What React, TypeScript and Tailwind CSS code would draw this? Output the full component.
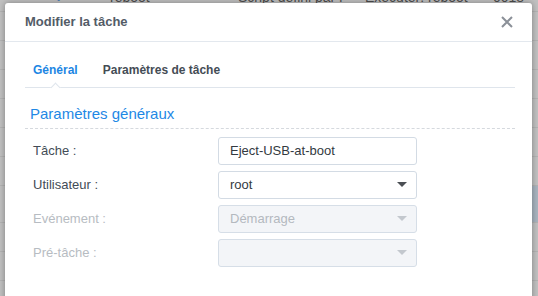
import React from "react";

const font = { fontFamily: '"Liberation Sans", Arial, sans-serif' };

function Caret({ disabled }: { disabled?: boolean }) {
  return (
    <svg width="10" height="6" viewBox="0 0 10 6" className="shrink-0">
      <path d="M0 0 L10 0 L5 5 Z" fill={disabled ? "#c3c8ce" : "#4b4f54"} />
    </svg>
  );
}

function Row({
  label,
  disabled,
  children,
}: {
  label: string;
  disabled?: boolean;
  children: React.ReactNode;
}) {
  return (
    <div className="flex items-center h-[28px]">
      <div
        className={`w-[193px] pl-[8px] text-[13px] ${
          disabled ? "text-[#b7bcc2]" : "text-[#434c56]"
        }`}
      >
        {label}
      </div>
      {children}
    </div>
  );
}

export default function App() {
  const bgRows = [
    { a: "reboot", b: "Script défini par l'", c: "Exécuter: reboot", d: "0018" },
    { a: "", b: "", c: "", d: "" },
    { a: "", b: "", c: "", d: "" },
    { a: "", b: "", c: "", d: "" },
    { a: "", b: "", c: "", d: "" },
    { a: "", b: "", c: "", d: "" },
    { a: "", b: "", c: "", d: "" },
    { a: "", b: "", c: "", d: "" },
    { a: "", b: "", c: "", d: "" },
    { a: "", b: "", c: "", d: "" },
    { a: "", b: "", c: "", d: "" },
  ];
  return (
    <div className="relative w-[538px] h-[296px] overflow-hidden bg-[#c1c1c1]" style={font}>
      {/* background table (dimmed) */}
      <div className="flex flex-col mt-[-17px]">
        {bgRows.map((r, i) => (
          <div
            key={i}
            className={`flex items-center border-b border-[#b3b3b3] text-[14px] text-[#4d4d4d] ${
              i === 7 ? "h-[37px] bg-[linear-gradient(to_right,#c1c1c1_0px,#c1c1c1_20px,#a9b4bf_20px)]" : "h-[29px]"
            }`}
          >
            <div className="w-[55px]" />
            <div className="w-[55px] text-[#2a6fb5]">{i === 0 ? "✔" : ""}</div>
            <div className="w-[128px]">{r.a}</div>
            <div className="w-[127px]">{r.b}</div>
            <div className="w-[128px]">{r.c}</div>
            <div className="w-[45px]">{r.d}</div>
          </div>
        ))}
      </div>

      {/* dialog */}
      <div className="absolute left-[5px] top-[3px] w-[527px] h-[310px] bg-white rounded-t-[3px] shadow-[0_0_6px_rgba(0,0,0,0.35)] flex flex-col">
        <div className="flex items-center justify-between h-[39px] pl-[20px] pr-[19px] border-b border-[#e3e8ee]">
          <div className="text-[13px] font-bold text-[#535c67]">Modifier la tâche</div>
          <svg width="12" height="12" viewBox="0 0 12 12">
            <path d="M1 1 L11 11 M11 1 L1 11" stroke="#8b9098" strokeWidth="2" />
          </svg>
        </div>

        <div className="px-[20px] pr-[17px]">
          <div className="relative flex items-end h-[46px] border-b border-[#dfe5ec] text-[12px] font-bold">
            <div className="pl-[8px] pb-[8px] text-[#1c86e3]">Général</div>
            <div className="pl-[25px] pb-[8px] text-[#444c55]">Paramètres de tâche</div>
            <div className="absolute left-[27px] bottom-[-4px] w-[7px] h-[7px] bg-white border-l border-t border-[#dfe5ec] rotate-45" />
          </div>

          <div className="pl-[5px] pt-[17px] pb-[5px] text-[15px] text-[#1e88e5] leading-[18px]">
            Paramètres généraux
          </div>
          <div className="border-b border-dashed border-[#d5d9de]" />

          <div className="flex flex-col gap-[6px] pt-[8px]">
            <Row label="Tâche :">
              <div className="w-[199px] h-[28px] border border-[#d3dbe4] rounded-[3px] flex items-center px-[11px] text-[13px] text-[#333a41]">
                Eject-USB-at-boot
              </div>
            </Row>
            <Row label="Utilisateur :">
              <div className="w-[199px] h-[28px] border border-[#d3dbe4] rounded-[3px] flex items-center justify-between pl-[11px] pr-[9px] text-[13px] text-[#333a41]">
                <span>root</span>
                <Caret />
              </div>
            </Row>
            <Row label="Evénement :" disabled>
              <div className="w-[199px] h-[28px] border border-[#d6dee7] bg-[#f3f5f8] rounded-[3px] flex items-center justify-between pl-[11px] pr-[9px] text-[13px] text-[#b4b9bf]">
                <span>Démarrage</span>
                <Caret disabled />
              </div>
            </Row>
            <Row label="Pré-tâche :" disabled>
              <div className="w-[199px] h-[28px] border border-[#d6dee7] bg-[#f3f5f8] rounded-[3px] flex items-center justify-end pl-[11px] pr-[9px] text-[13px]">
                <Caret disabled />
              </div>
            </Row>
          </div>
        </div>
      </div>
    </div>
  );
}
